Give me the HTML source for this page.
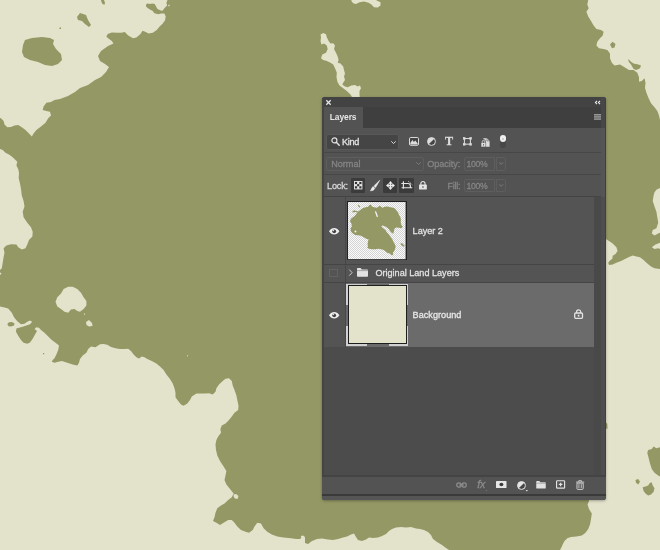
<!DOCTYPE html>
<html><head><meta charset="utf-8"><title>Layers</title>
<style>
html,body{margin:0;padding:0;background:#e3e2ca;}
body{width:660px;height:550px;position:relative;overflow:hidden;font-family:"Liberation Sans",sans-serif;}
.map{position:absolute;left:0;top:0;display:block}
.panel{position:absolute;left:322px;top:97px;width:283.7px;height:403.4px;background:#535353;border-radius:3px;overflow:hidden;will-change:transform;box-shadow:0 1px 3px rgba(0,0,0,.3);}
.abs{position:absolute}
.topbar{left:0;top:0;width:284px;height:10px;background:#434343}
.tabrow{left:0;top:10px;width:284px;height:21px;background:#3f3f3f}
.tab{left:1px;top:10px;width:40.3px;height:21px;background:#535353}
.tabtxt{left:7.8px;top:15px;font-size:8.45px;font-weight:bold;color:#e6e6e6;line-height:10px;white-space:nowrap;letter-spacing:-0.1px}
.sep{left:1px;width:282px;height:1px;background:#474747}
.t{position:absolute;white-space:nowrap;color:#dcdcdc;font-size:9.4px;line-height:11px;-webkit-text-stroke:0.28px currentColor}
.dis{color:#858585}
.box{position:absolute;box-sizing:border-box;border:1px solid #626262;border-radius:2px}
.dark{position:absolute;background:#3b3b3b;border-radius:1px}
svg{position:absolute;overflow:visible}
</style></head><body>
<svg class="map" width="660" height="550" viewBox="0 0 660 550">
<rect width="660" height="550" fill="#e3e2ca"/>
<polygon fill="#949865" points="167.5,0 588.2,0 587.3,4.5 588.7,8.2 586.4,11.8 588.2,16.4 591,21 593.6,25.5 596.4,29 601,30 603.6,31.8 602.7,35.5 600,38.2 597.3,41.8 596.4,45.5 599,48.2 603.6,49 607.3,50 610,53.6 610,58.2 611.8,62.7 614.5,65.5 620,64.5 624.5,67.3 629,70 633.6,70 637.3,72.7 639,77.3 639,81.8 641.8,81 644.5,78.2 645.5,82.7 645,88 646.5,93 648.5,98 651,103.3 654.5,107.3 657.3,111 659,115.5 660,120 660,188 656.7,189.6 654.5,192.3 653.6,195.5 652.7,201 654.5,206.4 656.4,211.8 657.3,217.3 658.2,222.7 656.4,228.2 652.7,230 651.8,233.6 654.5,235.5 658.2,233.6 660,232.7 660,242.7 655.5,244.5 651.8,247.3 654.5,249 658.2,248.2 660,249 660,269 654.5,268.2 651,266.4 647.3,263.6 643.6,260 640,257.3 636.4,256.4 632.7,255.5 629,257 625.5,258.7 621,261 616.4,262.7 612.7,264.5 609,265 608.2,262.7 610,260.5 612.4,258.7 612.7,255.8 615.5,254 617.6,251 616.4,247.3 612.7,243.6 609,241 605.5,238.7 600,238 589,490 589,501 587.6,504.5 589,509 591.8,513.6 591,519 590,524.5 588.2,529 585.5,532.7 581.8,535.5 576.4,536.4 571,537 567.3,538.2 564.5,541 562.7,544.5 561,548.2 560,550 449,550 446,548 442,545 437,542 433,539 431,535 428,532 424,530 420,529 416,528.4 411,527 406,527.6 401,527 396,527.6 392,529 389,531 386,534 382,536 378,537.6 373,538 369,537.6 366,539.6 362,541 358,540 356,537 354,533.6 351,534.4 347,536.4 343,537.6 338,539 333,540 328,539.6 322,538.4 317,539 312,541 308,544 305,543 305,538 302,537 300,539 296.4,539 291,538.2 283.6,537.6 277.3,536.4 271.8,534.5 267.3,531.8 263.6,528.2 261,523.6 257.3,522.7 254.5,526.4 252.7,530 249,532.7 245.5,531.8 241,530 237.3,526.4 234.5,522.7 231.8,520 228.2,520 223.6,522.7 220,525 216.4,522.7 213,521 214.5,517.3 215.5,512.7 217.3,508.2 221,505.5 224.5,503.6 228.2,500 231.8,497.3 233.6,493.6 230,489 226.4,484.5 224.5,480 225.5,475.5 226.4,471 223.6,466.4 220,461 217.3,455.5 216,450 215.5,444.5 216.4,440 218.2,436.4 221,432.7 220.4,429 221.8,425.5 225.5,423.6 229,420 231.8,416.4 234.5,412.7 238.2,410 238.5,405.5 237.3,400 236.4,395.5 234.5,390 232.7,385.5 231.8,381 229,378.2 225.5,378.7 222.7,381 219,384.5 216.4,388.2 215.5,391.8 212.7,394.5 209,393.3 204.5,393.6 201.8,393.6 196.4,393.6 191.8,396.4 190,400 187.3,403.6 183.6,405.8 181,404.5 178.2,401 175.5,397.3 175.5,392.7 174.5,388.2 172.7,383.6 170,379 166.4,374.5 163.6,370 160,366.4 156.4,363.6 151.8,361 147.3,359 144.5,357.3 141.8,356.4 139,358.5 136.4,357.3 133.6,354.5 131,351 128.2,348.7 124.5,349 120,349 115.5,348.2 111,347 107.3,344.7 103.6,344 100,344.2 95.5,347.3 91,346.4 88.2,349 86.4,352.7 82.7,355.5 80,359 79,362.7 77.3,365.5 72.7,364.5 67.3,362.7 61.8,361 58.2,361.8 54.5,362.7 51.8,361.8 52.7,360 54.5,358.2 56.4,354.5 58.2,350 59,345.5 55.5,342.7 51.8,340 48.2,336.4 44.5,332.7 41,330 39,327.8 36.4,327.3 34.5,329 37,331 35,334.5 32.7,338.7 30,342.4 27.3,343.8 23.6,342.7 21,340 18.2,335.8 16,331.8 16.4,328.5 19,327.8 22.7,326.7 26.4,325.5 30,324.2 32.2,321.8 30,320.5 27.3,321.8 24.5,323.8 21,324.2 17.3,321.3 14.2,317.6 11.8,312.7 8.2,308.5 3.6,307.3 0,306.4 0,274.8 1.2,274.2 1.2,273 0,272.5 0,270 1.8,268.2 2.7,262.7 3.6,257.3 4.5,252.7 3.6,248.2 6.4,245.5 11,244.2 16.4,244.5 18.2,247.3 21.8,249.6 25.5,248.2 27.3,244.5 29,240 32.4,236.4 32.7,231.8 31,227.3 27.3,222.7 23.6,217.3 22.7,211.8 24.5,206.4 23.6,201 21.8,195.5 21,189 20,183.6 18.7,178.2 19,172.7 18.2,169 16.4,165.5 17.3,161.8 15.5,160 12.7,157.3 9,154.5 5.5,152.7 2.7,150 0,149 0,118 1,118.2 3.6,121 4.5,124.5 7.3,127.3 11,127 14.5,125.5 18.2,125 21.8,127.3 25.5,130 29,133.6 31.8,136.4 33.6,133.6 36.4,130 41,126.4 45.5,122.7 48.2,118.2 51,115.5 50,111.8 46.4,111 42.7,110 43.6,106.4 46.4,102.7 51,102 54.5,100 60,99 68,96 75,92 80,88 88,85 95,80 101,77 106,72 109,67 105,64 100,61 98,56 101,51 108,46 113.5,43.5 111.8,40.9 109.1,38.9 106.4,36.8 107.7,34.1 111.8,32.5 117.3,32.7 121.4,32.7 124.8,32.1 128.2,35.5 133,38.2 136.4,37.5 140.5,34.1 142.5,30.7 144.6,31.4 148.7,33.4 152.8,32.7 156.8,30 159.6,26.6 162.3,23.9 165,20.5 165.7,16.4 164.4,13.6 161,13.6 158.2,14.3 155.5,13.6 154.1,13 152.8,10.9 150,9.5 148,8.2 146.2,6.8 145.9,4.8 147.3,3.4 150,4.1 152,3.4 154.8,4.1 156.2,6.8 157.5,8.9 160.3,10.2 162.3,10.9 164.4,8.2 167.1,5.5 166.4,2.7 167.5,0"/>
<polygon fill="#949865" points="660,447.3 656.4,448.2 653.6,446.4 651.8,449 648.2,450 647.3,452.7 648.7,458.2 650,463.6 651.8,469 654.5,472.7 658.2,475.5 660,476.4"/>
<polygon fill="#949865" points="23,45 25,40 32,38 42,37 50,38 54,40 53,44 56,49 61,54 62,60 58,64 52,66 45,65 38,62 30,60 24,57 22,52"/>
<polygon fill="#949865" points="77,17 80,13 86,15 88,20 91,25 89,27 85,24 82,21 78,20"/>
<polygon fill="#949865" points="101,0 104,0 105,3 104.5,4.8 102.5,4 101.5,2"/>
<polygon fill="#949865" points="59.5,27.5 61,27.5 61,29 59.5,29"/>
<polygon fill="#949865" points="7.3,324 9,322.3 12,322 14.5,323.5 14,325.5 11,326.5 8.5,326.2"/>
<polygon fill="#949865" points="43,353 44.2,353 44.2,354.2 43,354.2"/>
<polygon fill="#949865" points="610,44.5 612.5,41.8 615.5,44 614.5,47.5 612,48.2"/>
<polygon fill="#949865" points="628.2,59 631,61.8 633.6,63.6 638.2,64.5 641,65.5 640,68.2 636.4,70 633.6,69 631,64.5 628.7,61.8"/>
<polygon fill="#949865" points="642.7,487.3 645.5,486.4 648.2,485.5 650,482.7 651.8,482.4 652.7,485.5 654.5,488.2 653.6,491.8 651,494.5 648.2,495.5 645.5,493.6 643.6,491"/>
<polygon fill="#949865" points="635.5,480 638.2,479 640,481.8 638.2,484.5 636,482.7"/>
<polygon fill="#949865" points="605,421 607.3,424 607.5,429 605,428"/>
<polygon fill="#e3e2ca" points="55.5,301.8 57.3,297.3 61,293.6 63.6,289 68.2,286.7 72.7,286.7 77.3,289 81,292.7 83.6,297.3 86.4,301 86.4,305.5 83.6,309 80,311.8 77.3,311 74.5,309 71,309.6 68.2,312.7 64.5,311.8 61,309 57.3,306.4"/>
<polygon fill="#e3e2ca" points="86,322 89,320 92,323 92.5,326 89,326.5 86.5,325"/>
<polygon fill="#e3e2ca" points="84,313.5 85,313.5 85,314.8 84,314.8"/>
<polygon fill="#e3e2ca" points="320.5,34.5 323.2,33 326,34.2 326.8,37.3 328.6,41 330.5,43.6 333.2,43.3 335,45.5 334,49 336,52.7 337.7,56.4 338.6,60 337.7,62.7 340.5,63.6 343.2,66.4 344,70 345,73.6 344,76.4 345,80 343.2,82.7 342.3,84.5 345,86.4 347.7,87.3 351.4,85.5 355,85 357.7,86.4 360,85.5 361,88.2 359.5,91 359.5,94.5 360,99 353.2,99 350.5,94.5 346.8,91 343.2,88.2 339.5,85.5 337.4,81.8 336.5,77.3 336.8,72.7 335,68.2 333.2,64.5 330.5,62.7 326.8,61 323.2,60 321,58.2 322.3,54.5 326,52.7 327.7,49 326.8,45.5 324,43.6 321.4,44.5 320.5,41 321,37.3"/>
<polygon fill="#e3e2ca" points="351.4,0 351.4,1 353.2,3.3 356,4 359.5,2.2 364,1.5 368.6,2.7 371.4,4.5 374,7.3 377.7,7.6 380.5,5.5 380.5,2.2 377.7,1 376,0"/>
<polygon fill="#e3e2ca" points="168.3,4.8 169.6,4.8 169.6,6.2 168.3,6.2"/>
<polygon fill="#e3e2ca" points="187,355.3 188,355.3 188,356.3 187,356.3"/>
<polygon fill="#e3e2ca" points="233.5,494.5 236,494 238.5,496 237.5,499 235,498.5 233.8,497"/>
<polygon fill="#e3e2ca" points="300.8,536 303,535.6 305,537 304.5,539.5 302,539.5"/>
</svg>
<div class="panel">
  <div class="abs topbar"></div>
  <div class="abs tabrow"></div>
  <div class="abs tab"></div>
  <div class="abs tabtxt">Layers</div>
  <!-- close x -->
  <svg style="left:4.3px;top:3.3px" width="5" height="5" viewBox="0 0 5 5"><path d="M0.3 0.3L4.7 4.7M4.7 0.3L0.3 4.7" stroke="#e6e6e6" stroke-width="1.3" fill="none"/></svg>
  <!-- collapse << -->
  <svg style="left:272.7px;top:4px" width="5.6" height="3.2" viewBox="0 0 5.6 3.2"><path d="M2 0L0.5 1.6L2 3.2M5 0L3.5 1.6L5 3.2" stroke="#ececec" stroke-width="1.15" fill="none"/></svg>
  <!-- hamburger -->
  <svg style="left:271.9px;top:17.1px" width="7.4" height="5.8" viewBox="0 0 7.4 5.8"><rect width="7.4" height="5.8" fill="#5c5c5c"/><rect width="7.4" height="1.35" fill="#979797"/><rect y="2.22" width="7.4" height="1.35" fill="#979797"/><rect y="4.45" width="7.4" height="1.35" fill="#979797"/></svg>

  <!-- filter row -->
  <div class="box" style="left:3.7px;top:37.3px;width:73px;height:15.4px;background:#454545;border-color:#585858"></div>
  <svg style="left:8.6px;top:40.4px" width="9" height="9" viewBox="0 0 9 9"><circle cx="3.4" cy="3.4" r="2.5" stroke="#e0e0e0" stroke-width="1.2" fill="none"/><path d="M5.3 5.3L8.2 8.2" stroke="#e0e0e0" stroke-width="1.5" stroke-linecap="round"/></svg>
  <div class="t" id="tKind" style="left:19.9px;top:39.8px;font-size:9.1px;letter-spacing:-0.3px;color:#e4e4e4">Kind</div>
  <svg style="left:69px;top:43.8px" width="5" height="3.2" viewBox="0 0 5 3.2"><path d="M0.3 0.3L2.5 2.6L4.7 0.3" stroke="#d8d8d8" stroke-width="1" fill="none"/></svg>
  <!-- filter icons -->
  <svg style="left:87px;top:40.3px" width="10" height="8.8" viewBox="0 0 10 8.8"><rect x="0.5" y="0.5" width="9" height="7.8" rx="1.2" fill="#444" stroke="#dcdcdc" stroke-width="1"/><path d="M1.3 7.4V6L3.4 3L4.9 5L6.3 3.4L8.7 6.4V7.4Z" fill="#dcdcdc"/></svg>
  <svg style="left:105px;top:40.2px" width="9" height="9" viewBox="0 0 9 9"><circle cx="4.5" cy="4.5" r="4" fill="#dcdcdc"/><path d="M7.33 1.67A4 4 0 0 1 1.67 7.33Z" fill="#444" transform="rotate(0 4.5 4.5)"/><circle cx="4.5" cy="4.5" r="3.9" fill="none" stroke="#dcdcdc" stroke-width="0.9"/></svg>
  <div class="t" style="left:122.9px;top:38.4px;font-family:'Liberation Serif',serif;font-weight:bold;font-size:12.2px;color:#dcdcdc;line-height:12px">T</div>
  <svg style="left:140.5px;top:40.2px" width="8.8" height="8.7" viewBox="0 0 9.4 9"><rect x="1.5" y="1.5" width="6.4" height="6" fill="none" stroke="#dcdcdc" stroke-width="1.1"/><rect x="0" y="0" width="2.6" height="2.6" fill="#dcdcdc"/><rect x="6.8" y="0" width="2.6" height="2.6" fill="#dcdcdc"/><rect x="0" y="6.4" width="2.6" height="2.6" fill="#dcdcdc"/><rect x="6.8" y="6.4" width="2.6" height="2.6" fill="#dcdcdc"/></svg>
  <svg style="left:158.5px;top:40.6px" width="8.8" height="9" viewBox="0 0 9 9"><path d="M2.4 0.2H6.1L8.8 2.9V8.8H2.4Z" fill="#dedede"/><path d="M6.1 0.2V2.9H8.8" fill="none" stroke="#555" stroke-width=".6"/><path d="M1.2 5V3.7A1.35 1.35 0 0 1 3.9 3.7V5" fill="none" stroke="#4c4c4c" stroke-width="2.2"/><rect x="-0.2" y="4.5" width="5.4" height="4.7" fill="#4c4c4c"/><rect x="0.3" y="5" width="4.4" height="3.8" fill="#dedede"/><path d="M1.2 5V3.7A1.35 1.35 0 0 1 3.9 3.7V5" fill="none" stroke="#dedede" stroke-width=".9"/><rect x="2.1" y="6.2" width=".9" height="1.4" fill="#4c4c4c"/></svg>
  <div class="abs" style="left:178.4px;top:39px;width:6px;height:11.8px;border-radius:3px;background:#484848"></div>
  <div class="abs" style="left:178.3px;top:38.4px;width:6.2px;height:6.2px;border-radius:50%;background:#f0f0f0"></div>
  <div class="abs" style="left:180.4px;top:40.5px;width:2px;height:2px;border-radius:50%;background:#c4c4c4"></div>

  <div class="abs sep" style="top:55px"></div>
  <!-- blend row -->
  <div class="box" style="left:4.4px;top:59.7px;width:97.2px;height:13.9px;border-color:#5e5e5e"></div>
  <div class="t dis" id="tNormal" style="left:9.2px;top:61.9px;font-size:9.1px">Normal</div>
  <svg style="left:94px;top:65.3px" width="5" height="3.2" viewBox="0 0 5 3.2"><path d="M0.3 0.3L2.5 2.6L4.7 0.3" stroke="#7a7a7a" stroke-width="1" fill="none"/></svg>
  <div class="t dis" id="tOpacity" style="left:105.3px;top:61.9px;font-size:9.1px;letter-spacing:-0.05px">Opacity:</div>
  <div class="box" style="left:141.5px;top:60px;width:31.5px;height:13.6px;border-color:#5e5e5e;border-radius:2px 0 0 2px"></div>
  <div class="t dis" id="t100a" style="left:144.4px;top:61.9px;font-size:8.7px;letter-spacing:-0.3px">100%</div>
  <div class="box" style="left:174px;top:60px;width:9.5px;height:13.6px;border-color:#5e5e5e;border-radius:0 2px 2px 0"></div>
  <svg style="left:176.5px;top:65.3px" width="4.4" height="3" viewBox="0 0 4.4 3"><path d="M0.3 0.3L2.2 2.4L4.1 0.3" stroke="#7a7a7a" stroke-width="1" fill="none"/></svg>

  <div class="abs sep" style="top:76.5px"></div>
  <!-- lock row -->
  <div class="t" id="tLock" style="left:5px;top:84.1px;font-size:9.1px;color:#d8d8d8;letter-spacing:-0.15px">Lock:</div>
  <div class="dark" style="left:28.7px;top:81.2px;width:14.3px;height:14.5px"></div>
  <svg style="left:31.8px;top:84.3px" width="8.4" height="8.4" viewBox="0 0 9 9"><rect x="0.5" y="0.5" width="8" height="8" fill="#e6e6e6" stroke="#e6e6e6" stroke-width="1"/><rect x="1" y="1" width="2.33" height="2.33" fill="#333"/><rect x="5.66" y="1" width="2.33" height="2.33" fill="#333"/><rect x="3.33" y="3.33" width="2.33" height="2.33" fill="#333"/><rect x="1" y="5.66" width="2.33" height="2.33" fill="#333"/><rect x="5.66" y="5.66" width="2.33" height="2.33" fill="#333"/></svg>
  <svg style="left:47.8px;top:83px" width="10" height="11" viewBox="0 0 10 11"><path d="M9.8 0.2L3.9 5.9L5.6 7.6Z" fill="#ececec" stroke="#ececec" stroke-width=".5"/><path d="M3.3 6.6L4.9 8.2C4.4 9.9 2.6 11 0.2 10.8C1.5 9.8 1.4 7.1 3.3 6.6Z" fill="#ececec" stroke="#ececec" stroke-width=".4"/></svg>
  <div class="dark" style="left:61px;top:81.2px;width:14.2px;height:14.5px"></div>
  <svg style="left:63.6px;top:84px" width="9" height="9" viewBox="0 0 9 9"><path d="M4.5 0L6.7 2.7H2.3ZM4.5 9L6.7 6.3H2.3ZM0 4.5L2.7 2.3V6.7ZM9 4.5L6.3 2.3V6.7Z" fill="#ececec"/><path d="M4.5 2V7M2 4.5H7" stroke="#ececec" stroke-width="1.3"/></svg>
  <div class="dark" style="left:77px;top:81.2px;width:14.5px;height:14.5px"></div>
  <svg style="left:78.8px;top:84px" width="11.6" height="9" viewBox="0 0 11.6 9"><path d="M2.4 0.3V7.7M0.3 2.5H7Q9.4 2.5 9.4 5V6.8M0.6 6.8H11.3" stroke="#e6e6e6" stroke-width="1.15" fill="none"/><path d="M7.4 0.4L11.3 3.7" stroke="#e6e6e6" stroke-width="1" stroke-dasharray="1.3 .9"/></svg>
  <svg style="left:96.5px;top:84.3px" width="7.9" height="8.5" viewBox="0 0 8.6 9.4"><rect x="0" y="4" width="8.6" height="5.4" rx=".6" fill="#e6e6e6"/><path d="M2 4.4V2.8A2.3 2.3 0 0 1 6.6 2.8V4.4" stroke="#e6e6e6" stroke-width="1.2" fill="none"/><rect x="3.7" y="5.8" width="1.2" height="1.8" fill="#444"/></svg>
  <div class="t dis" id="tFill" style="left:125.6px;top:84.1px;font-size:9.1px;letter-spacing:-0.3px">Fill:</div>
  <div class="box" style="left:141.5px;top:82px;width:31.5px;height:13.4px;border-color:#5e5e5e;border-radius:2px 0 0 2px"></div>
  <div class="t dis" id="t100b" style="left:144.4px;top:84.1px;font-size:8.7px;letter-spacing:-0.3px">100%</div>
  <div class="box" style="left:174px;top:82px;width:9.5px;height:13.4px;border-color:#5e5e5e;border-radius:0 2px 2px 0"></div>
  <svg style="left:176.5px;top:87.3px" width="4.4" height="3" viewBox="0 0 4.4 3"><path d="M0.3 0.3L2.2 2.4L4.1 0.3" stroke="#7a7a7a" stroke-width="1" fill="none"/></svg>

  <div class="abs sep" style="top:99px;background:#444"></div>
  <!-- layer list -->
  <div class="abs" style="left:0px;top:100px;width:272px;height:278px;background:#4c4c4c"></div>
  <div class="abs" style="left:0px;top:100px;width:272px;height:150px;background:#545454"></div>
  <div class="abs" style="left:272px;top:100px;width:8px;height:278px;background:#494949"></div>
  <div class="abs" style="left:279.4px;top:0px;width:3.2px;height:31px;background:#47474a"></div>
  <div class="abs" style="left:279.4px;top:31px;width:3.2px;height:69px;background:#555558"></div>
  <div class="abs" style="left:279.4px;top:100px;width:3.2px;height:304px;background:#4e4e51"></div>
  <div class="abs" style="left:282.5px;top:0px;width:1.3px;height:404px;background:#404040"></div>
  <div class="abs" style="left:23px;top:100px;width:1px;height:150px;background:#474747"></div>
  <!-- layer 2 row -->
  <svg style="left:7.3px;top:131px" width="10.4" height="6.6" viewBox="0 0 10.4 6.6"><path d="M0 3.3C1.6 1 3.2 0 5.2 0S8.8 1 10.4 3.3C8.8 5.6 7.2 6.6 5.2 6.6S1.6 5.6 0 3.3Z" fill="#efefef"/><circle cx="5.2" cy="3.3" r="1.9" fill="#444"/><circle cx="4.5" cy="2.6" r=".7" fill="#efefef"/></svg>
  <div class="abs" style="left:25.4px;top:104.3px;width:59.6px;height:59.2px;background:#222"></div>
  <svg style="left:26.4px;top:105.3px" width="57.6" height="57.2" viewBox="36 36 481 477"><defs><pattern id="chk" x="36" y="36" width="16.7" height="16.7" patternUnits="userSpaceOnUse"><rect width="16.7" height="16.7" fill="#fbfbfb"/><rect width="8.35" height="8.35" fill="#d2d2d2"/><rect x="8.35" y="8.35" width="8.35" height="8.35" fill="#d2d2d2"/></pattern></defs><rect x="36" y="36" width="481" height="477" fill="url(#chk)"/>
   <g fill="#949865">
   <path d="M60.4 283L56.4 255.2L68.3 239.3L64.4 215.4L52.4 195.5L60.4 175.7L76.3 163.7L92.2 151.8L104.1 135.9L116 124L96.2 120L76.3 124L72.3 112L88.2 104.1L104.1 110.5L120 116L135.9 104.1L151.8 92.2L167.7 84.2L183.6 80.3L203.5 76.3L215.4 60.4L227.3 56.4L235.3 72.3L255.2 80.3L275 84.2L290.9 76.3L302.9 64.4L310.8 76.3L326.7 84.2L342.6 76.3L366.5 73.9L390.3 78.7L414.2 84.2L430 92.2L442 108.1L453.9 124L461.9 143.9L473.8 163.7L477.8 183.6L476.2 207.5L481.7 227.3L493.7 243.2L481.7 255.2L461.9 251.2L438 249L424 260L414 300L398 290L385 275L378.4 263.1L358.5 247.2L338.6 235.3L322.7 231.3L314.8 243.2L330.7 255.2L350.6 271.1L358.5 286.5L378.4 306.4L390.3 326.2L406.2 346.1L414.2 366L426.1 385.9L434 405.7L430 425.6L422.1 445.5L410.2 461.4L414.2 481.3L398.3 477.3L386.3 465.4L366.5 461.4L350.6 449.5L334.7 437.5L314.8 429.6L290.9 425.6L263.1 429.6L235.3 429.6L211.4 425.6L195.5 417.7L203.5 405.7L199.5 385.9L203.5 366L207.5 346.1L187.6 342.1L167.7 330.2L143.9 318.3L120 314.3L96.2 310.3L76.3 298.4Z"/>
   <path d="M118 62L126 60L138 78L132 84L122 72Z"/><path d="M473.8 381.9L485.7 377.9L509.6 401.8L501.6 409.7L481.7 397.8Z"/>
   </g>
   <circle cx="98.5" cy="282.5" r="8" fill="#f2f2f2"/><path d="M259.1 112L271.1 116L283 143.9L287 163.7L275 159.8L267.1 135.9Z" fill="#eeeeee"/>
  </svg>
  <div class="t" id="tL2" style="left:90.6px;top:128.9px;font-size:9.1px;color:#e2e2e2">Layer 2</div>
  <div class="abs sep" style="top:166.5px;background:#454545;width:271px"></div>
  <!-- group row -->
  <div class="box" style="left:7.3px;top:171.5px;width:9.2px;height:8.8px;border-color:#626262;border-radius:0"></div>
  <svg style="left:26.8px;top:172px" width="3.5" height="7.2" viewBox="0 0 4 7.4"><path d="M0.4 0.3L3.5 3.7L0.4 7.1" stroke="#dcdcdc" stroke-width="1" fill="none"/></svg>
  <svg style="left:34.5px;top:171px" width="11" height="8.8" viewBox="0 0 11 8.8"><path d="M0 0.8Q0 0 .8 0H3.6L4.8 1.4H10.2Q11 1.4 11 2.2V8Q11 8.8 10.2 8.8H.8Q0 8.8 0 8Z" fill="#e2e2e2"/><path d="M0 2.6H11" stroke="#777" stroke-width=".6"/></svg>
  <div class="t" id="tOrig" style="left:53.4px;top:170.9px;font-size:9.1px;color:#e2e2e2">Original Land Layers</div>
  <div class="abs sep" style="top:184.5px;background:#454545;width:271px"></div>
  <!-- background row -->
  <div class="abs" style="left:23.5px;top:185.5px;width:248.5px;height:64.5px;background:#6b6b6b"></div>
  <svg style="left:7.3px;top:214.5px" width="10.4" height="6.6" viewBox="0 0 10.4 6.6"><path d="M0 3.3C1.6 1 3.2 0 5.2 0S8.8 1 10.4 3.3C8.8 5.6 7.2 6.6 5.2 6.6S1.6 5.6 0 3.3Z" fill="#efefef"/><circle cx="5.2" cy="3.3" r="1.9" fill="#444"/><circle cx="4.5" cy="2.6" r=".7" fill="#efefef"/></svg>
  <div class="abs" style="left:24.2px;top:186.5px;width:61.8px;height:62.1px;background:#d0d0d0"></div>
  <div class="abs" style="left:45px;top:186px;width:22px;height:63px;background:#6b6b6b"></div>
  <div class="abs" style="left:24px;top:208.3px;width:62.2px;height:20.3px;background:#6b6b6b"></div>
  <div class="abs" style="left:25.5px;top:187.8px;width:59.2px;height:59.5px;background:#1e1e1e"></div>
  <div class="abs" style="left:26.5px;top:188.9px;width:57.4px;height:57.2px;background:#e3e2ca"></div>
  <div class="t" id="tBg" style="left:90.6px;top:212.7px;font-size:9.1px;color:#e8e8e8;letter-spacing:0.03px">Background</div>
  <svg style="left:251.7px;top:212.4px" width="9.2" height="10" viewBox="0 0 9.2 10"><rect x="0.7" y="4" width="7.8" height="5.3" rx="1" fill="none" stroke="#e4e4e4" stroke-width="1.3"/><path d="M2.5 4V2.9A2.1 2.1 0 0 1 6.7 2.9V4" stroke="#e4e4e4" stroke-width="1.2" fill="none"/><rect x="3.8" y="5.7" width="1.6" height="1.9" fill="#e4e4e4"/></svg>

  <div class="abs" style="left:0;top:0;width:1.6px;height:404px;background:#444"></div>
  <!-- bottom toolbar -->
  <div class="abs" style="left:0;top:378px;width:284px;height:1.7px;background:#444"></div>
  <div class="abs" style="left:0;top:379.7px;width:284px;height:17.2px;background:#535353"></div>
  <div class="abs" style="left:0;top:396.8px;width:284px;height:2.2px;background:#3a3a3a"></div>
  <div class="abs" style="left:0;top:399px;width:284px;height:5px;background:#555"></div>
  <!-- link -->
  <svg style="left:134px;top:385px" width="11" height="6" viewBox="0 0 11 6"><rect x=".7" y=".8" width="4.4" height="4.4" rx="2.2" fill="none" stroke="#8c8c8c" stroke-width="1.25"/><rect x="5.9" y=".8" width="4.4" height="4.4" rx="2.2" fill="none" stroke="#8c8c8c" stroke-width="1.25"/><path d="M3.2 3H7.8" stroke="#8c8c8c" stroke-width="1.25"/></svg>
  <div class="t" style="left:155.2px;top:382.2px;font-style:italic;font-size:10.6px;color:#8c8c8c;letter-spacing:-0.2px">fx</div><div class="abs" style="left:164px;top:392.6px;width:1.2px;height:1.2px;background:#777"></div>
  <!-- mask -->
  <svg style="left:173.8px;top:384.1px" width="10.5" height="7.1" viewBox="0 0 10.5 7.1"><rect width="10.5" height="7.1" rx=".6" fill="#e6e6e6"/><ellipse cx="5.4" cy="3.6" rx="2" ry="1.75" fill="#3a3a3a"/></svg>
  <!-- adjustment -->
  <svg style="left:194.6px;top:383.8px" width="12" height="11" viewBox="0 0 12 11"><circle cx="4.5" cy="4.5" r="4" fill="#e4e4e4"/><path d="M7.33 1.67A4 4 0 0 1 1.67 7.33Z" fill="#444"/><circle cx="4.5" cy="4.5" r="3.9" fill="none" stroke="#e4e4e4" stroke-width="0.9"/><path d="M8.6 9H11L9.8 10.4Z" fill="#e4e4e4"/></svg>
  <!-- folder -->
  <svg style="left:214px;top:384.3px" width="10" height="7.6" viewBox="0 0 11 8.8"><path d="M0 0.8Q0 0 .8 0H3.6L4.8 1.4H10.2Q11 1.4 11 2.2V8Q11 8.8 10.2 8.8H.8Q0 8.8 0 8Z" fill="#e2e2e2"/><path d="M0 2.6H11" stroke="#777" stroke-width=".6"/></svg>
  <!-- new layer -->
  <svg style="left:233.9px;top:383.3px" width="9.2" height="8.9" viewBox="0 0 9.6 9"><rect x=".6" y=".6" width="8.4" height="7.8" rx=".8" fill="none" stroke="#e2e2e2" stroke-width="1.2"/><path d="M4.8 2.6V6.4M2.9 4.5H6.7" stroke="#e2e2e2" stroke-width="1.3"/></svg>
  <!-- trash -->
  <svg style="left:254.2px;top:383px" width="8.2" height="9.8" viewBox="0 0 8.4 9.6"><path d="M0 1.9H8.4M2.8 1.6V.5H5.6V1.6" stroke="#d0d0d0" stroke-width="1" fill="none"/><path d="M1 3H7.4V8.6Q7.4 9.4 6.6 9.4H1.8Q1 9.4 1 8.6Z" fill="none" stroke="#d0d0d0" stroke-width="1"/><path d="M3 4V8.2M5.4 4V8.2" stroke="#d0d0d0" stroke-width=".9"/></svg>
</div>
</body></html>
